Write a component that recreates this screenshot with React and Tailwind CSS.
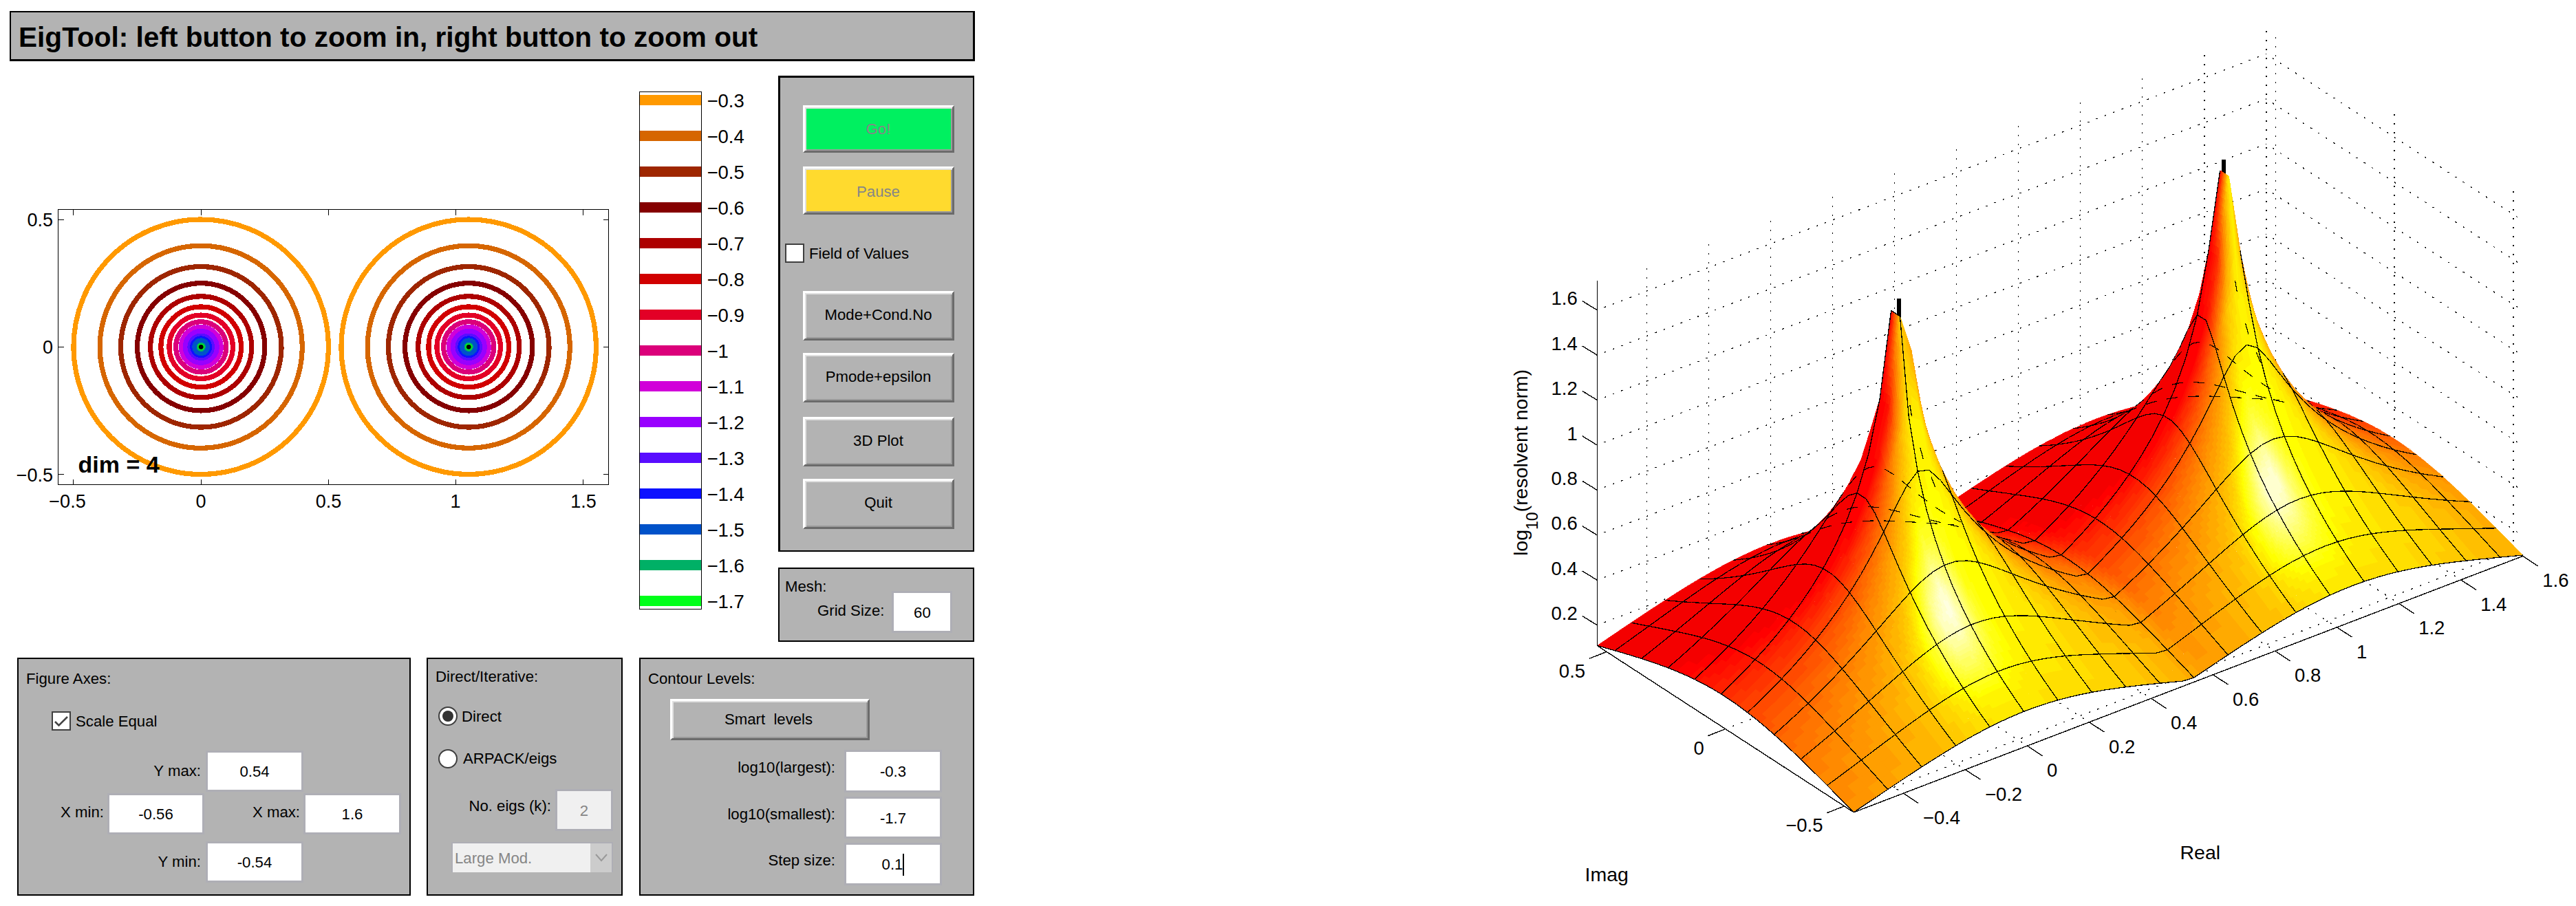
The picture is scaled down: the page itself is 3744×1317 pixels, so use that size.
const FONT = "'Liberation Sans', Arial, sans-serif";

const LEVELS = [
  { label: "−0.3", value: -0.3, color: "#ff9900" },
  { label: "−0.4", value: -0.4, color: "#d66600" },
  { label: "−0.5", value: -0.5, color: "#9e2600" },
  { label: "−0.6", value: -0.6, color: "#850000" },
  { label: "−0.7", value: -0.7, color: "#ad0000" },
  { label: "−0.8", value: -0.8, color: "#d10000" },
  { label: "−0.9", value: -0.9, color: "#e30026" },
  { label: "−1", value: -1.0, color: "#db007a" },
  { label: "−1.1", value: -1.1, color: "#d100d9" },
  { label: "−1.2", value: -1.2, color: "#9900ff" },
  { label: "−1.3", value: -1.3, color: "#590dff" },
  { label: "−1.4", value: -1.4, color: "#0d12ff" },
  { label: "−1.5", value: -1.5, color: "#0052c9" },
  { label: "−1.6", value: -1.6, color: "#00b066" },
  { label: "−1.7", value: -1.7, color: "#00ff19" },
];

const EIGS = [0, 1.05];
const X_MIN = -0.56;
const X_MAX = 1.6;
const Y_MAX = 0.54;

// ---------- surface geometry ----------

const NX = 59;
const NY = 29;
const Z_MIN = 0.109;
const Z_MAX = 1.731;

const gridX = (i) => X_MIN + ((X_MAX - X_MIN) * i) / NX;
const gridY = (j) => -Y_MAX + (2 * Y_MAX * j) / NY;

function height(x, y) {
  return -Math.log10(Math.min(...EIGS.map((e) => Math.hypot(x - e, y))));
}

// orthographic view, az -37.5, el 30; result is in svg pixels
function project(x, y, z) {
  return [
    559.9 + 450.2 * x - 345.4 * y,
    963.1 - 172.4 * x - 224.4 * y - 327.1 * (z - Z_MIN),
  ];
}

const VIEW = [-0.527, -0.687, 0.5];
const LIGHT = [0.17, -0.91, 0.38];
const GLINT = [0.21, -0.84, 0.5];
const dot = (a, b) => a[0] * b[0] + a[1] * b[1] + a[2] * b[2];

function shade(i, j) {
  const i0 = Math.max(0, i - 1);
  const i1 = Math.min(NX, i + 1);
  const j0 = Math.max(0, j - 1);
  const j1 = Math.min(NY, j + 1);
  const x = gridX(i);
  const y = gridY(j);
  const zx = (height(gridX(i1), y) - height(gridX(i0), y)) / (gridX(i1) - gridX(i0));
  const zy = (height(x, gridY(j1)) - height(x, gridY(j0))) / (gridY(j1) - gridY(j0));
  const len = Math.hypot(zx, zy, 1);
  const n = [-zx / len, -zy / len, 1 / len];
  const diffuse = Math.max(0, dot(n, LIGHT));
  const spec = Math.max(0, 2 * dot(n, GLINT) * dot(n, VIEW) - dot(GLINT, VIEW));
  return (0.55 + 0.6 * diffuse + 0.4 * Math.pow(spec, 14)) / 1.55;
}

// 64 level "hot" colormap
function hot(v) {
  const k = Math.min(63, Math.max(0, Math.floor(v * 64))) + 1;
  const r = Math.min(1, k / 24);
  const g = Math.min(1, Math.max(0, (k - 24) / 24));
  const b = Math.min(1, Math.max(0, (k - 48) / 16));
  return `rgb(${Math.round(r * 255)},${Math.round(g * 255)},${Math.round(b * 255)})`;
}

const fmt = ([x, y]) => `${x.toFixed(1)} ${y.toFixed(1)}`;

function buildSurface() {
  const pts = [];
  for (let i = 0; i <= NX; i++) {
    pts.push([]);
    for (let j = 0; j <= NY; j++) {
      const x = gridX(i);
      const y = gridY(j);
      pts[i].push({ p: project(x, y, height(x, y)), c: shade(i, j) });
    }
  }

  const out = [];
  const push = (color, d, line) => {
    const last = out[out.length - 1];
    if (last && last.color === color && last.line === line) last.d += d;
    else out.push({ color, d, line });
  };
  const edge = (a, b) => push("#000", `M${fmt(a.p)}L${fmt(b.p)}`, true);

  // back to front, so nearer cells cover the ones behind
  for (let i = NX - 1; i >= 0; i--) {
    for (let j = NY - 1; j >= 0; j--) {
      const a = pts[i][j];
      const b = pts[i + 1][j];
      const c = pts[i + 1][j + 1];
      const d = pts[i][j + 1];
      const cs = [a.c, b.c, c.c, d.c];
      const n = Math.min(10, Math.max(1, Math.ceil((Math.max(...cs) - Math.min(...cs)) * 64)));
      const mix = (u, v, f) =>
        f(a) * (1 - u) * (1 - v) + f(b) * u * (1 - v) + f(c) * u * v + f(d) * (1 - u) * v;
      const at = (u, v) => [mix(u, v, (q) => q.p[0]), mix(u, v, (q) => q.p[1])];
      for (let s = n - 1; s >= 0; s--) {
        for (let t = n - 1; t >= 0; t--) {
          const color = hot(mix((s + 0.5) / n, (t + 0.5) / n, (q) => q.c));
          const quad = [
            at(s / n, t / n),
            at((s + 1) / n, t / n),
            at((s + 1) / n, (t + 1) / n),
            at(s / n, (t + 1) / n),
          ];
          push(color, `M${quad.map(fmt).join("L")}Z`, false);
        }
      }
      if ((i + 1) % 3 === 0) edge(b, c);
      if ((j + 1) % 3 === 0) edge(d, c);
      if (i % 3 === 0) edge(a, d);
      if (j % 3 === 0) edge(a, b);
    }
  }
  return out;
}

const SURFACE = buildSurface();

// mesh lines from the far side that show through near each peak
function buildGhosts() {
  const lines = [];
  for (const e of EIGS) {
    for (const [j, from, to] of [[18, -0.1, 0.3], [21, -0.2, 0.4], [24, -0.27, 0.46]]) {
      const y = gridY(j);
      const line = [];
      for (let x = e + from; x <= e + to; x += 0.02) {
        line.push(fmt(project(x, y, -Math.log10(Math.hypot(x - e, y)))));
      }
      lines.push(`M${line.join("L")}`);
    }
    // short pieces down the right flank
    const [cx, cy] = project(e, 0, 1.6);
    lines.push(`M${cx + 16} ${cy + 114}l5 30`);
    lines.push(`M${cx + 31} ${cy + 176}l7 25`);
    lines.push(`M${cx + 47} ${cy + 218}l8 20`);
  }
  return lines;
}

const GHOSTS = buildGhosts();

// ---------- small widgets ----------

function Panel({ className = "", children }) {
  return (
    <div className={`bg-[#b3b3b3] border-2 border-black ${className}`}>{children}</div>
  );
}

function PushButton({ className = "", children }) {
  return (
    <button
      className={`flex items-center justify-center border-[3px] border-t-white border-l-white border-r-[#6b6b6b] border-b-[#6b6b6b] shadow-[inset_2px_2px_0_#e0e0e0,inset_-2px_-2px_0_#9b9b9b] whitespace-pre leading-7 ${className}`}
    >
      {children}
    </button>
  );
}

function Field({ className = "bg-white", children }) {
  return (
    <div
      className={`flex items-center justify-center border-[3px] border-[#aeaeb5] pt-0.5 leading-7 ${className}`}
    >
      {children}
    </div>
  );
}

function CheckBox({ checked }) {
  return (
    <span className="w-7 h-7 shrink-0 bg-white border-2 border-[#404040]">
      {checked && (
        <svg viewBox="0 0 24 24" className="w-6 h-6" fill="none" stroke="#444" strokeWidth="2.6">
          <path d="M3 13L8.5 18.5L21 6" />
        </svg>
      )}
    </span>
  );
}

function Radio({ checked }) {
  return (
    <span className="w-7 h-7 shrink-0 rounded-full bg-white border-2 border-[#404040] flex items-center justify-center">
      {checked && <span className="w-4 h-4 rounded-full bg-[#333]" />}
    </span>
  );
}

// ---------- plots ----------

// the innermost contours are coarse and come out smaller than their level
function contourRadius(value) {
  const r = 370.5 * Math.pow(10, value);
  if (value <= -1.6) return r - 4.6;
  if (value <= -1.3) return r - 2.4;
  return r - 0.4;
}

function ContourPlot() {
  const px = (x) => 292.2 + 370.5 * x;
  const py = (y) => 415.3 - 370.5 * y;
  const xt = [[-0.5, "−0.5", 98], [0, "0", 292], [0.5, "0.5", 477.5], [1, "1", 662], [1.5, "1.5", 848]];
  const yt = [[0.5, "0.5"], [0, "0"], [-0.5, "−0.5"]];
  return (
    <svg width="929" height="840" viewBox="0 0 929 840" fontFamily={FONT} fontSize="27">
      {EIGS.map((e) =>
        LEVELS.map((l) => (
          <circle
            key={`${e}${l.label}`}
            cx={px(e)}
            cy={py(0)}
            r={contourRadius(l.value)}
            fill="none"
            stroke={l.color}
            strokeWidth={l.value <= -1.6 ? 4 : 7.2}
            shapeRendering="crispEdges"
          />
        ))
      )}
      {EIGS.map((e) => (
        <circle key={e} cx={px(e)} cy={py(0)} r="3.4" />
      ))}
      <g stroke="#000" strokeWidth="1" fill="none" shapeRendering="crispEdges">
        <rect x="84.5" y="215.5" width="800" height="400" />
        {xt.map(([v]) => (
          <path key={v} d={`M${px(v)} 215.5v8M${px(v)} 615.5v-8`} />
        ))}
        {yt.map(([v]) => (
          <path key={v} d={`M84.5 ${py(v)}h8M884.5 ${py(v)}h-8`} />
        ))}
      </g>
      {xt.map(([v, t, x]) => (
        <text key={t} x={x} y="648.5" textAnchor="middle">{t}</text>
      ))}
      {yt.map(([v, t]) => (
        <text key={t} x="77" y={py(v) + 10} textAnchor="end">{t}</text>
      ))}
      <text x="113.5" y="598" fontSize="34" fontWeight="bold">dim = 4</text>
    </svg>
  );
}

function Legend() {
  return (
    <svg width="202" height="840" viewBox="0 0 202 840" fontFamily={FONT} fontSize="27.5">
      {LEVELS.map((l, i) => (
        <g key={l.label}>
          <rect x="1" y={49 + i * 52} width="89" height="15" fill={l.color} />
          <text x="98.5" y={67 + i * 52}>{l.label}</text>
        </g>
      ))}
      <rect x="0.5" y="44.5" width="90" height="752" fill="none" stroke="#000" shapeRendering="crispEdges" />
    </svg>
  );
}

const X_TICKS = [-0.4, -0.2, 0, 0.2, 0.4, 0.6, 0.8, 1, 1.2, 1.4, 1.6];
const Y_TICKS = [0.5, 0, -0.5];
const Z_TICKS = [0.2, 0.4, 0.6, 0.8, 1, 1.2, 1.4, 1.6];
const tickText = (v) => String(v).replace("-", "−");

function seg(a, b) {
  return `M${fmt(project(...a))}L${fmt(project(...b))}`;
}

function SurfacePlot() {
  const uprights = [
    ...X_TICKS.map((x) => seg([x, Y_MAX, 1.702], [x, Y_MAX, Z_MIN])),
    ...Y_TICKS.map((y) => seg([X_MAX, y, 1.702], [X_MAX, y, Z_MIN])),
  ];
  const grid = [
    ...X_TICKS.map((x) => seg([x, Y_MAX, Z_MIN], [x, -Y_MAX, Z_MIN])),
    ...Y_TICKS.map((y) => seg([X_MIN, y, Z_MIN], [X_MAX, y, Z_MIN])),
    ...Z_TICKS.map((z) => seg([X_MIN, Y_MAX, z], [X_MAX, Y_MAX, z])),
    ...Z_TICKS.map((z) => seg([X_MAX, Y_MAX, z], [X_MAX, -Y_MAX, z])),
  ];
  const axes =
    seg([X_MIN, Y_MAX, Z_MAX], [X_MIN, Y_MAX, Z_MIN]) +
    seg([X_MIN, Y_MAX, Z_MIN], [X_MIN, -Y_MAX, Z_MIN]) +
    seg([X_MIN, -Y_MAX, Z_MIN], [X_MAX, -Y_MAX, Z_MIN]);

  return (
    <svg width="1574" height="1317" viewBox="-30 0 1574 1317" fontFamily={FONT} fontSize="27.5">
      <g stroke="#000" fill="none" shapeRendering="crispEdges">
        <g strokeWidth="1.6" strokeDasharray="2 11">
          {uprights.map((d) => (
            <path key={d} d={d} />
          ))}
        </g>
        <g strokeWidth="1.3" strokeDasharray="2.4 10.8" strokeDashoffset="-11">
          {grid.map((d) => (
            <path key={d} d={d} />
          ))}
        </g>
        <path d={axes} strokeWidth="1.4" />
      </g>
      <rect x="557" y="434" width="6" height="30" />
      <rect x="1029" y="232" width="6" height="26" />
      <g shapeRendering="crispEdges">
        {SURFACE.map((s, k) =>
          s.line ? (
            <path key={k} d={s.d} fill="none" stroke="#000" strokeWidth="1.3" />
          ) : (
            <path key={k} d={s.d} fill={s.color} stroke={s.color} strokeWidth="0.6" />
          )
        )}
      </g>
      <g fill="none" stroke="#000" strokeWidth="1.2" strokeDasharray="16 15" shapeRendering="crispEdges">
        {GHOSTS.map((d) => (
          <path key={d} d={d} />
        ))}
      </g>
      <g stroke="#000" strokeWidth="1.4" shapeRendering="crispEdges">
        {Z_TICKS.map((z) => {
          const [x, y] = project(X_MIN, Y_MAX, z);
          return <path key={z} d={`M${x} ${y}l-21.5 -13.2`} />;
        })}
        {X_TICKS.map((v) => {
          const [x, y] = project(v, -Y_MAX, Z_MIN);
          return <path key={v} d={`M${x} ${y}l22 14.4`} />;
        })}
        {Y_TICKS.map((v) => {
          const [x, y] = project(X_MIN, v, Z_MIN);
          return <path key={v} d={`M${x} ${y}l-25.5 10`} />;
        })}
      </g>
      {Z_TICKS.map((z) => {
        const [x, y] = project(X_MIN, Y_MAX, z);
        return <text key={z} x={x - 28.5} y={y - 7.5} textAnchor="end">{tickText(z)}</text>;
      })}
      {X_TICKS.map((v) => {
        const [x, y] = project(v, -Y_MAX, Z_MIN);
        return <text key={v} x={x + 28.5} y={y + 45}>{tickText(v)}</text>;
      })}
      {Y_TICKS.map((v) => {
        const [x, y] = project(X_MIN, v, Z_MIN);
        return <text key={v} x={x - 31} y={y + 37.5} textAnchor="end">{tickText(v)}</text>;
      })}
      <text x="968.5" y="1248.5" fontSize="28.5">Real</text>
      <text x="103.5" y="1281" fontSize="28.5">Imag</text>
      <text transform="translate(19.5 808) rotate(-90)" fontSize="28.5">
        log<tspan dy="15" fontSize="23">10</tspan>
        <tspan dy="-15">(resolvent norm)</tspan>
      </text>
    </svg>
  );
}

// ---------- panels ----------

function Controls() {
  return (
    <div className="w-[285px] mt-[21px] flex flex-col">
      <Panel className="h-[692px] flex flex-col items-center pl-[5px] border-[3px] border-b-2 border-r-2">
        <PushButton className="w-[220px] h-[69px] mt-10 bg-[#00f060] text-[#868686]">Go!</PushButton>
        <PushButton className="w-[220px] h-[70px] mt-5 pt-1 bg-[#ffda2e] text-[#868686]">Pause</PushButton>
        <div className="self-start flex items-center gap-[7px] ml-[2px] mt-[41px] leading-7">
          <CheckBox />
          <span className="pt-0.5">Field of Values</span>
        </div>
        <PushButton className="w-[220px] h-[72px] mt-10 pb-[3px]">Mode+Cond.No</PushButton>
        <PushButton className="w-[220px] h-[72px] mt-[18px] pb-0.5">Pmode+epsilon</PushButton>
        <PushButton className="w-[220px] h-[72px] mt-[21px] pb-0.5">3D Plot</PushButton>
        <PushButton className="w-[220px] h-[73px] mt-[18px] pb-[3px]">Quit</PushButton>
      </Panel>
      <Panel className="h-[108px] mt-[23px]">
        <div className="flex leading-7">
          <span className="ml-2 mt-[12px] w-[47px]">Mesh:</span>
          <span className="mt-[47px] whitespace-nowrap">Grid Size:</span>
          <Field className="w-[88px] h-[61px] mt-8 ml-[11px] bg-white">60</Field>
        </div>
      </Panel>
    </div>
  );
}

function FigureAxes() {
  return (
    <Panel className="w-[572px] h-[346px] flex flex-col leading-7">
      <span className="ml-[11px] mt-[15px]">Figure Axes:</span>
      <div className="flex items-center gap-[7px] ml-12 mt-8">
        <CheckBox checked />
        <span className="pt-0.5">Scale Equal</span>
      </div>
      <div className="flex items-center gap-[7px] mt-7">
        <span className="w-[265px] text-right">Y max:</span>
        <Field className="w-[142px] h-[60px] bg-white">0.54</Field>
      </div>
      <div className="flex items-center gap-[5px] mt-0.5">
        <span className="w-[124px] text-right pb-1">X min:</span>
        <Field className="w-[141px] h-[60px] bg-white">-0.56</Field>
        <span className="w-[134px] text-right pb-1">X max:</span>
        <Field className="w-[142px] h-[60px] bg-white">1.6</Field>
      </div>
      <div className="flex items-center gap-[7px] mt-2.5">
        <span className="w-[265px] text-right">Y min:</span>
        <Field className="w-[142px] h-[60px] bg-white">-0.54</Field>
      </div>
    </Panel>
  );
}

function SolverMode() {
  return (
    <Panel className="w-[285px] h-[346px] flex flex-col leading-7">
      <span className="ml-[11px] mt-3">Direct/Iterative:</span>
      <div className="flex items-center gap-[6px] ml-[15px] mt-[28px]">
        <Radio checked />
        <span className="pt-0.5">Direct</span>
      </div>
      <div className="flex items-center gap-[8px] ml-[15px] mt-[33px]">
        <Radio />
        <span>ARPACK/eigs</span>
      </div>
      <div className="flex mt-[30px]">
        <span className="w-[179px] text-right mt-[11px]">No. eigs (k):</span>
        <Field className="w-[84px] h-[61px] ml-[6px] bg-[#f0f0f0] text-[#868686]">2</Field>
      </div>
      <div className="ml-[34px] mt-4 w-[235px] h-11 flex border-2 border-b-0 border-[#aeaeb5] bg-[#f0f0f0] text-[#868686]">
        <span className="flex-1 pl-[3px] pt-2">Large Mod.</span>
        <span className="w-[31px] bg-[#cccccc] flex items-center justify-center">
          <svg width="18" height="12" viewBox="0 0 18 12" fill="none" stroke="#999" strokeWidth="2">
            <path d="M1 1L9 10L17 1" />
          </svg>
        </span>
      </div>
    </Panel>
  );
}

function ContourLevels() {
  return (
    <Panel className="w-[487px] h-[346px] flex flex-col leading-7">
      <span className="ml-[11px] mt-[15px]">Contour Levels:</span>
      <PushButton className="w-[290px] h-[60px] ml-[43px] mt-[15px] pr-1">{"Smart  levels"}</PushButton>
      <div className="flex mt-[14px]">
        <span className="w-[283px] text-right mt-[12px]">log10(largest):</span>
        <Field className="w-[142px] h-[62px] ml-[13px] bg-white">-0.3</Field>
      </div>
      <div className="flex mt-[6px]">
        <span className="w-[283px] text-right mt-[12px]">log10(smallest):</span>
        <Field className="w-[142px] h-[61px] ml-[13px] bg-white">-1.7</Field>
      </div>
      <div className="flex mt-[6px]">
        <span className="w-[283px] text-right mt-[12px]">Step size:</span>
        <Field className="w-[142px] h-[62px] ml-[13px] bg-white">
          0.1<span className="w-0.5 h-8 bg-black" />
        </Field>
      </div>
    </Panel>
  );
}

export default function App() {
  return (
    <div className="w-[3744px] h-[1317px] overflow-hidden bg-white flex text-black text-[22.2px] font-['Liberation_Sans',Arial,sans-serif]">
      <div className="w-[2170px] flex flex-col">
        <Panel className="ml-[14px] mt-4 w-[1403px] h-[73px] border-r-[3px] border-b-[3px] flex items-center">
          <h1 className="ml-[11px] pt-1 text-[40.6px] leading-none font-bold whitespace-nowrap">
            EigTool: left button to zoom in, right button to zoom out
          </h1>
        </Panel>
        <div className="flex h-[867px]">
          <ContourPlot />
          <Legend />
          <Controls />
        </div>
        <div className="flex ml-[25px]">
          <FigureAxes />
          <div className="w-[23px]" />
          <SolverMode />
          <div className="w-6" />
          <ContourLevels />
        </div>
      </div>
      <SurfacePlot />
    </div>
  );
}
